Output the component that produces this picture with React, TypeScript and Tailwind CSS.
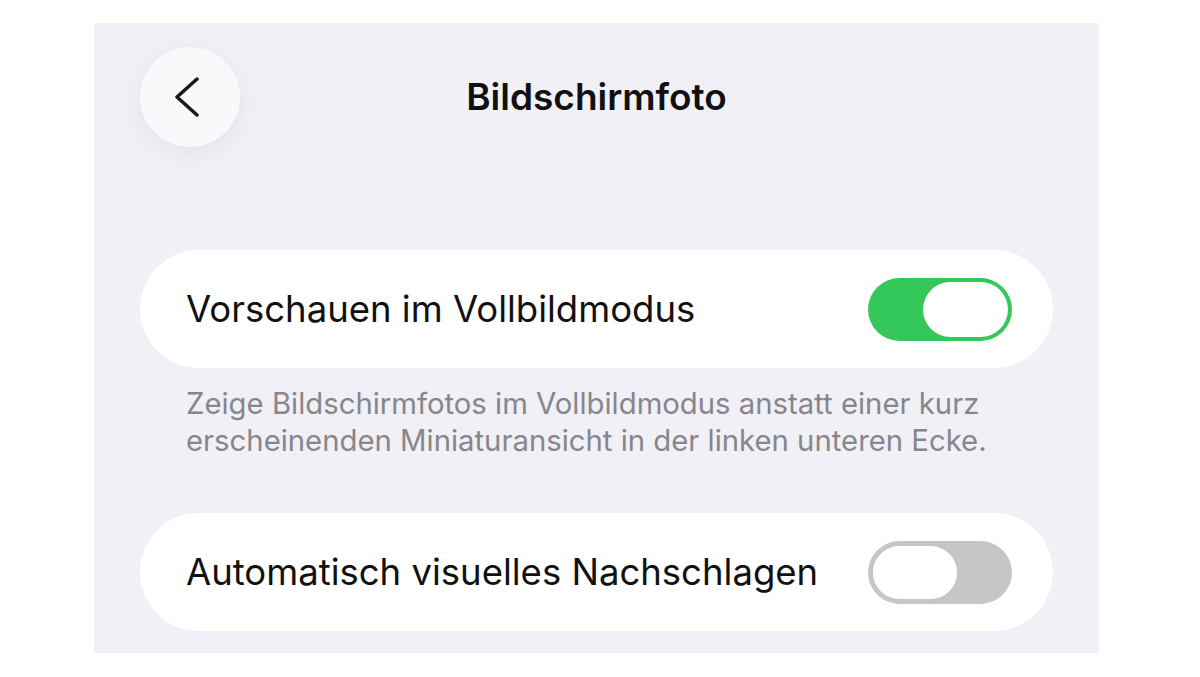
const Toggle = ({ on }: { on: boolean }) => {
  return (
    <div
      className={
        on
          ? "flex h-[63px] w-[144px] shrink-0 items-center justify-end rounded-full bg-[#34c759] p-[4px]"
          : "flex h-[63px] w-[144px] shrink-0 items-center justify-start rounded-full bg-[#c6c6c8] p-[3px]"
      }
    >
      <div
        className={
          on
            ? "h-[55px] w-[85px] rounded-full bg-white"
            : "h-[57px] w-[88px] rounded-full border-[2px] border-[#c6c6c8] bg-white"
        }
      />
    </div>
  );
};

const SettingRow = ({ label, on }: { label: string; on: boolean }) => {
  return (
    <div className="flex h-[118px] items-center justify-between rounded-full bg-white pl-[46px] pr-[41px]">
      <span className="text-[36.5px] text-[#111111]">{label}</span>
      <Toggle on={on} />
    </div>
  );
};

export default function App() {
  return (
    <div className="h-[677px] w-[1200px] overflow-hidden bg-white pt-[23px] font-['Inter',sans-serif]">
      <div className="ml-[94px] h-[630px] w-[1005px] overflow-hidden bg-[#f1f0f6] px-[46px] pt-[24px]">
        <div className="flex h-[100px] items-center">
          <button
            aria-label="Zurück"
            className="flex h-[100px] w-[100px] items-center justify-center rounded-full bg-[#f9f9fb] shadow-[0_6px_24px_rgba(0,0,0,0.06)]"
          >
            <svg width="30" height="46" viewBox="0 0 30 46" fill="none">
              <path
                d="M22 5 L2 23 L22 41"
                stroke="#1a1a1a"
                strokeWidth="3.5"
                strokeLinecap="round"
                strokeLinejoin="round"
              />
            </svg>
          </button>
          <h1 className="flex-1 text-center text-[37px] font-semibold text-[#111111]">Bildschirmfoto</h1>
          <div className="w-[100px]" />
        </div>

        <div className="mt-[103px]">
          <SettingRow label="Vorschauen im Vollbildmodus" on />
        </div>

        <p className="mt-[17px] px-[46px] text-[29.3px] leading-[37px] text-[#86868b]">
          Zeige Bildschirmfotos im Vollbildmodus anstatt einer kurz erscheinenden Miniaturansicht in der linken unteren Ecke.
        </p>

        <div className="mt-[54px]">
          <SettingRow label="Automatisch visuelles Nachschlagen" on={false} />
        </div>
      </div>
    </div>
  );
}
